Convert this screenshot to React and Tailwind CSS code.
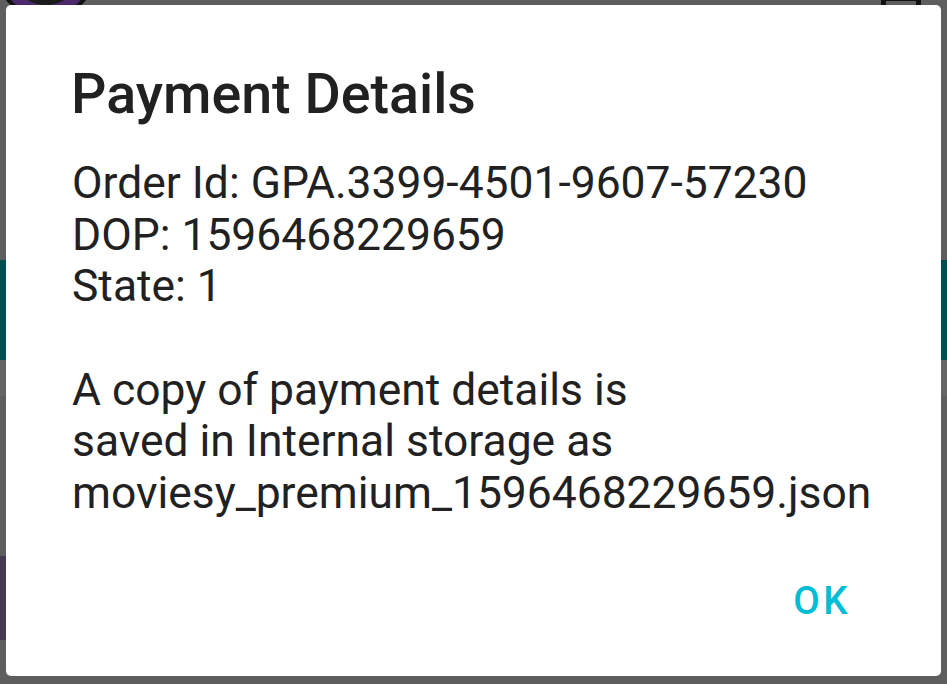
import React from 'react';

const lines = [
  'Order Id: GPA.3399-4501-9607-57230',
  'DOP: 1596468229659',
  'State: 1',
  '',
  'A copy of payment details is',
  'saved in Internal storage as',
  'moviesy_premium_1596468229659.json',
];

// dimmed page that sits behind the dialog
const Backdrop = () => (
  <div className="flex h-full w-full flex-col bg-[#5e5e5e]">
    <div className="flex h-[260px] items-start justify-between">
      <div className="-ml-[4px] -mt-[80px] flex h-[100px] w-[100px] shrink-0 items-center justify-center rounded-full border-[4px] border-[#111] bg-[#4a2a6a]">
        <div className="h-[70px] w-[70px] rounded-full border-[10px] border-[#1a1a1a] bg-[#55307a]" />
      </div>
      <div className="-mt-[4px] mr-[26px] h-[20px] w-[40px] rounded-[4px] border-[5px] border-[#111]" />
    </div>
    <div className="h-[100px] bg-[#004d52]" />
    <div className="h-[36px] bg-[#656565]" />
    <div className="flex flex-1 flex-col justify-between pb-[40px] pt-[160px]">
      <div className="h-[84px] w-[6px] bg-[#463a52]" />
    </div>
  </div>
);

export default function App() {
  return (
    <div className="relative h-[684px] w-[947px] overflow-hidden" style={{ fontFamily: 'Roboto, "Noto Sans", sans-serif' }}>
      <Backdrop />
      {/* modal dialog over the page */}
      <div className="absolute bottom-[8px] left-[6px] right-[6px] top-[5px] flex flex-col rounded-[5px] bg-white">
        <h2 className="pl-[65px] pt-[57px] text-[55.6px] font-medium leading-[64px] text-[#212121]">
          Payment Details
        </h2>
        <div className="mt-[32px] pl-[66px] text-[44.4px] leading-[51.7px] text-[#212121]">
          {lines.map((l, i) => (
            <div key={i} className="h-[51.7px] whitespace-nowrap">{l}</div>
          ))}
        </div>
        <div className="mt-auto flex justify-end pb-[53px] pr-[90px]">
          <button className="text-[38.5px] font-medium uppercase leading-[45px] tracking-[0.09em] text-[#00bcd4]">
            OK
          </button>
        </div>
      </div>
    </div>
  );
}
